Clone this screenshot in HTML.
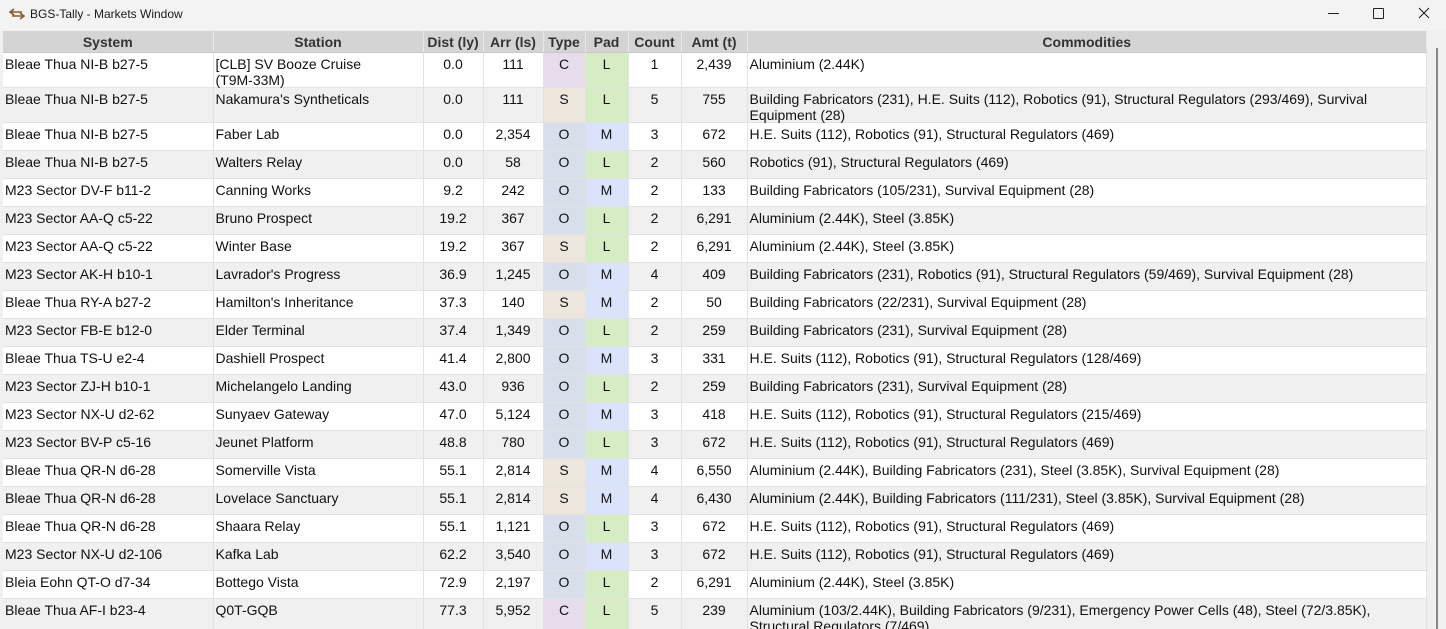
<!DOCTYPE html>
<html><head><meta charset="utf-8"><style>
body{margin:0;width:1446px;height:629px;overflow:hidden;background:#f0f0f0;font-family:"Liberation Sans",Arial,sans-serif;position:relative}
.tb{position:absolute;left:0;top:0;width:1446px;height:30px;background:#f3f3f3}
.tt{position:absolute;left:30px;top:7px;font-size:12px;color:#1a1a1a}
.wrap{position:absolute;left:3px;top:31px;width:1424px;height:598px;overflow:hidden;background:#fff}
table{border-collapse:collapse;table-layout:fixed;width:1424px;font-size:14px;color:#111}
th{background:#d4d4d4;height:21px;font-weight:bold;color:#333;font-size:14px;border-right:1px solid #e8e8e8;border-bottom:1px solid #c8c8c8;padding:0}
td{border-right:1px solid #e2e2e2;border-bottom:1px solid #e2e2e2;vertical-align:top;padding:3px 2px 0 2px;line-height:16px;height:24px;overflow:hidden;white-space:nowrap}
tr.t td{height:31px}
td.w{white-space:normal;overflow:visible}
.h{height:31px;overflow:visible}
.nw{white-space:nowrap}
tr:nth-child(odd) td{background:#f0f0f0}
.c{text-align:center}
td.C{background:#e6dcec!important}td.S{background:#ece6dc!important}td.O{background:#d7e0ea!important}
td.L{background:#d5ecc5!important}td.M{background:#dbe3fb!important}
.sb{position:absolute;left:1436px;top:48px;width:2px;height:581px;background:#888}
</style></head><body>
<div class="tb">
<svg style="position:absolute;left:9px;top:8px" width="16" height="12" viewBox="0 0 16 12"><path d="M5 1L1 4l4 3M1 4h12M11 5l4 3-4 3M15 8H3" fill="none" stroke="#8a5a2a" stroke-width="1.6"/></svg>
<div class="tt">BGS-Tally - Markets Window</div>
<div style="position:absolute;left:1328px;top:13px;width:11px;height:1px;background:#222"></div>
<div style="position:absolute;left:1373px;top:8px;width:9px;height:9px;border:1px solid #222;border-radius:1px"></div>
<svg style="position:absolute;left:1418px;top:7px" width="12" height="12"><path d="M1 1L11 11M11 1L1 11" stroke="#222" stroke-width="1.1"/></svg>
</div>
<div class="wrap"><table>
<colgroup><col style="width:210px"><col style="width:210px"><col style="width:60px"><col style="width:60px"><col style="width:42px"><col style="width:43px"><col style="width:53px"><col style="width:66px"><col></colgroup>
<tr><th>System</th><th>Station</th><th>Dist (ly)</th><th>Arr (ls)</th><th>Type</th><th>Pad</th><th>Count</th><th>Amt (t)</th><th>Commodities</th></tr>
<tr class="t"><td>Bleae Thua NI-B b27-5</td><td class="w"><div class="h">[CLB] SV Booze Cruise <span class="nw">(T9M-33M)</span></div></td><td class="c">0.0</td><td class="c">111</td><td class="c C">C</td><td class="c L">L</td><td class="c">1</td><td class="c">2,439</td><td>Aluminium (2.44K)</td></tr>
<tr class="t"><td>Bleae Thua NI-B b27-5</td><td>Nakamura's Syntheticals</td><td class="c">0.0</td><td class="c">111</td><td class="c S">S</td><td class="c L">L</td><td class="c">5</td><td class="c">755</td><td class="w"><div class="h">Building Fabricators (231), H.E. Suits (112), Robotics (91), Structural Regulators (293/469), Survival Equipment (28)</div></td></tr>
<tr><td>Bleae Thua NI-B b27-5</td><td>Faber Lab</td><td class="c">0.0</td><td class="c">2,354</td><td class="c O">O</td><td class="c M">M</td><td class="c">3</td><td class="c">672</td><td>H.E. Suits (112), Robotics (91), Structural Regulators (469)</td></tr>
<tr><td>Bleae Thua NI-B b27-5</td><td>Walters Relay</td><td class="c">0.0</td><td class="c">58</td><td class="c O">O</td><td class="c L">L</td><td class="c">2</td><td class="c">560</td><td>Robotics (91), Structural Regulators (469)</td></tr>
<tr><td>M23 Sector DV-F b11-2</td><td>Canning Works</td><td class="c">9.2</td><td class="c">242</td><td class="c O">O</td><td class="c M">M</td><td class="c">2</td><td class="c">133</td><td>Building Fabricators (105/231), Survival Equipment (28)</td></tr>
<tr><td>M23 Sector AA-Q c5-22</td><td>Bruno Prospect</td><td class="c">19.2</td><td class="c">367</td><td class="c O">O</td><td class="c L">L</td><td class="c">2</td><td class="c">6,291</td><td>Aluminium (2.44K), Steel (3.85K)</td></tr>
<tr><td>M23 Sector AA-Q c5-22</td><td>Winter Base</td><td class="c">19.2</td><td class="c">367</td><td class="c S">S</td><td class="c L">L</td><td class="c">2</td><td class="c">6,291</td><td>Aluminium (2.44K), Steel (3.85K)</td></tr>
<tr><td>M23 Sector AK-H b10-1</td><td>Lavrador's Progress</td><td class="c">36.9</td><td class="c">1,245</td><td class="c O">O</td><td class="c M">M</td><td class="c">4</td><td class="c">409</td><td>Building Fabricators (231), Robotics (91), Structural Regulators (59/469), Survival Equipment (28)</td></tr>
<tr><td>Bleae Thua RY-A b27-2</td><td>Hamilton's Inheritance</td><td class="c">37.3</td><td class="c">140</td><td class="c S">S</td><td class="c M">M</td><td class="c">2</td><td class="c">50</td><td>Building Fabricators (22/231), Survival Equipment (28)</td></tr>
<tr><td>M23 Sector FB-E b12-0</td><td>Elder Terminal</td><td class="c">37.4</td><td class="c">1,349</td><td class="c O">O</td><td class="c L">L</td><td class="c">2</td><td class="c">259</td><td>Building Fabricators (231), Survival Equipment (28)</td></tr>
<tr><td>Bleae Thua TS-U e2-4</td><td>Dashiell Prospect</td><td class="c">41.4</td><td class="c">2,800</td><td class="c O">O</td><td class="c M">M</td><td class="c">3</td><td class="c">331</td><td>H.E. Suits (112), Robotics (91), Structural Regulators (128/469)</td></tr>
<tr><td>M23 Sector ZJ-H b10-1</td><td>Michelangelo Landing</td><td class="c">43.0</td><td class="c">936</td><td class="c O">O</td><td class="c L">L</td><td class="c">2</td><td class="c">259</td><td>Building Fabricators (231), Survival Equipment (28)</td></tr>
<tr><td>M23 Sector NX-U d2-62</td><td>Sunyaev Gateway</td><td class="c">47.0</td><td class="c">5,124</td><td class="c O">O</td><td class="c M">M</td><td class="c">3</td><td class="c">418</td><td>H.E. Suits (112), Robotics (91), Structural Regulators (215/469)</td></tr>
<tr><td>M23 Sector BV-P c5-16</td><td>Jeunet Platform</td><td class="c">48.8</td><td class="c">780</td><td class="c O">O</td><td class="c L">L</td><td class="c">3</td><td class="c">672</td><td>H.E. Suits (112), Robotics (91), Structural Regulators (469)</td></tr>
<tr><td>Bleae Thua QR-N d6-28</td><td>Somerville Vista</td><td class="c">55.1</td><td class="c">2,814</td><td class="c S">S</td><td class="c M">M</td><td class="c">4</td><td class="c">6,550</td><td>Aluminium (2.44K), Building Fabricators (231), Steel (3.85K), Survival Equipment (28)</td></tr>
<tr><td>Bleae Thua QR-N d6-28</td><td>Lovelace Sanctuary</td><td class="c">55.1</td><td class="c">2,814</td><td class="c S">S</td><td class="c M">M</td><td class="c">4</td><td class="c">6,430</td><td>Aluminium (2.44K), Building Fabricators (111/231), Steel (3.85K), Survival Equipment (28)</td></tr>
<tr><td>Bleae Thua QR-N d6-28</td><td>Shaara Relay</td><td class="c">55.1</td><td class="c">1,121</td><td class="c O">O</td><td class="c L">L</td><td class="c">3</td><td class="c">672</td><td>H.E. Suits (112), Robotics (91), Structural Regulators (469)</td></tr>
<tr><td>M23 Sector NX-U d2-106</td><td>Kafka Lab</td><td class="c">62.2</td><td class="c">3,540</td><td class="c O">O</td><td class="c M">M</td><td class="c">3</td><td class="c">672</td><td>H.E. Suits (112), Robotics (91), Structural Regulators (469)</td></tr>
<tr><td>Bleia Eohn QT-O d7-34</td><td>Bottego Vista</td><td class="c">72.9</td><td class="c">2,197</td><td class="c O">O</td><td class="c L">L</td><td class="c">2</td><td class="c">6,291</td><td>Aluminium (2.44K), Steel (3.85K)</td></tr>
<tr class="t"><td>Bleae Thua AF-I b23-4</td><td>Q0T-GQB</td><td class="c">77.3</td><td class="c">5,952</td><td class="c C">C</td><td class="c L">L</td><td class="c">5</td><td class="c">239</td><td class="w"><div class="h">Aluminium (103/2.44K), Building Fabricators (9/231), Emergency Power Cells (48), Steel (72/3.85K), Structural Regulators (7/469)</div></td></tr>
</table></div>
<div class="sb"></div>
</body></html>
